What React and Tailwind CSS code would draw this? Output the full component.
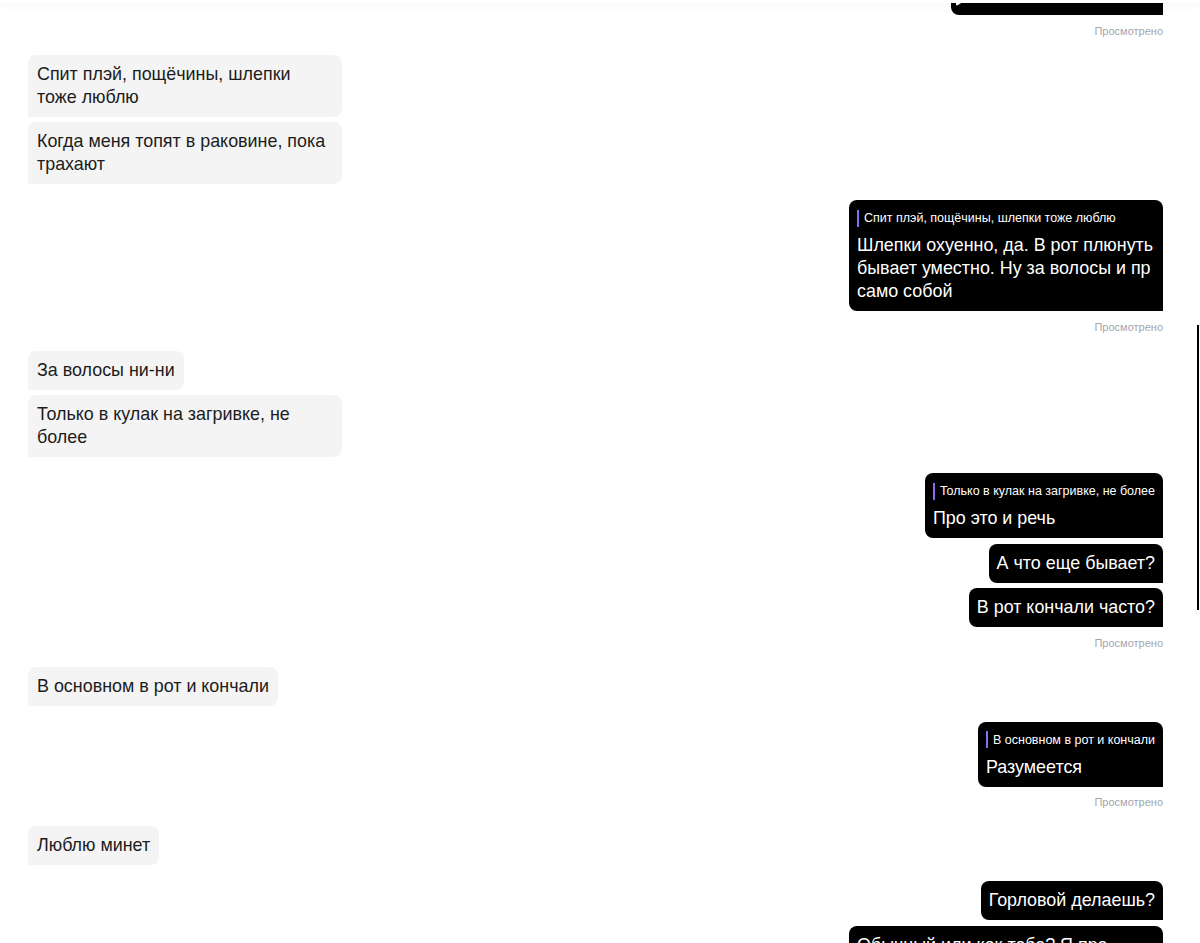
import React from 'react';

const font = { fontFamily: '"Liberation Sans", Arial, sans-serif' };

const groups = [
  { side: 'out', seen: true, msgs: [{ voice: true }] },
  {
    side: 'in',
    msgs: ['Спит плэй, пощёчины, шлепки тоже люблю', 'Когда меня топят в раковине, пока трахают'],
  },
  {
    side: 'out',
    seen: true,
    msgs: [
      {
        quote: 'Спит плэй, пощёчины, шлепки тоже люблю',
        text: 'Шлепки охуенно, да. В рот плюнуть бывает уместно. Ну за волосы и пр само собой',
      },
    ],
  },
  { side: 'in', msgs: ['За волосы ни-ни', 'Только в кулак на загривке, не более'] },
  {
    side: 'out',
    seen: true,
    msgs: [
      { quote: 'Только в кулак на загривке, не более', text: 'Про это и речь' },
      'А что еще бывает?',
      'В рот кончали часто?',
    ],
  },
  { side: 'in', msgs: ['В основном в рот и кончали'] },
  {
    side: 'out',
    seen: true,
    msgs: [{ quote: 'В основном в рот и кончали', text: 'Разумеется' }],
  },
  { side: 'in', msgs: ['Люблю минет'] },
  {
    side: 'out',
    msgs: ['Горловой делаешь?', 'Обычный или как тебе? Я про такой глубокий, до конца'],
  },
];

const VoiceBubble = () => (
  <div className="flex h-[44px] w-[212px] items-end gap-3 rounded-t-lg rounded-bl-lg bg-black pb-[9px] pl-1 pr-2">
    <svg width="14" height="16" viewBox="0 0 14 16" className="shrink-0">
      <path d="M2 1.5 L12.5 8 L2 14.5 Z" fill="none" stroke="white" strokeWidth="2" strokeLinejoin="round" />
    </svg>
    <div className="mb-[7px] h-[2px] flex-1 bg-white/40" />
  </div>
);

const Bubble = ({ side, msg }) => {
  if (msg.voice) return <VoiceBubble />;
  const out = side === 'out';
  const text = typeof msg === 'string' ? msg : msg.text;
  return (
    <div
      className={
        out
          ? 'max-w-[314px] rounded-t-lg rounded-bl-lg bg-black px-2 py-2 text-white'
          : 'max-w-[314px] rounded-t-lg rounded-br-lg bg-[#f4f4f4] px-[9px] py-2 text-[#1c1c1c]'
      }
    >
      {msg.quote && (
        <div className="mb-1.5 flex h-5 items-center gap-[5px]">
          <span className="h-[17px] w-[2px] shrink-0 bg-[#8b6cf0]" />
          <span className="whitespace-nowrap text-[12.5px] leading-5">{msg.quote}</span>
        </div>
      )}
      <p className="text-[17.9px] leading-[23px]">{text}</p>
    </div>
  );
};

export default function App() {
  return (
    <div className="relative h-[943px] w-full overflow-hidden bg-white" style={font}>
      <div className="-mt-[29px] flex flex-col gap-4 pl-[28px] pr-[37px]">
        {groups.map((g, i) => (
          <div key={i} className={`flex flex-col gap-[5.5px] ${g.side === 'out' ? 'items-end' : 'items-start'}`}>
            {g.msgs.map((m, j) => (
              <Bubble key={j} side={g.side} msg={m} />
            ))}
            {g.seen && <span className="mt-[2px] text-[11px] leading-4 text-[#a3a5b0]">Просмотрено</span>}
          </div>
        ))}
      </div>

      {/* header edge */}
      <div className="absolute inset-x-0 top-0 h-[3px] bg-white shadow-[0_2px_8px_rgba(0,0,0,0.07)]" />

      {/* scrollbar thumb */}
      <div className="absolute right-[1px] top-[325px] h-[285px] w-[2px] bg-black" />
    </div>
  );
}
